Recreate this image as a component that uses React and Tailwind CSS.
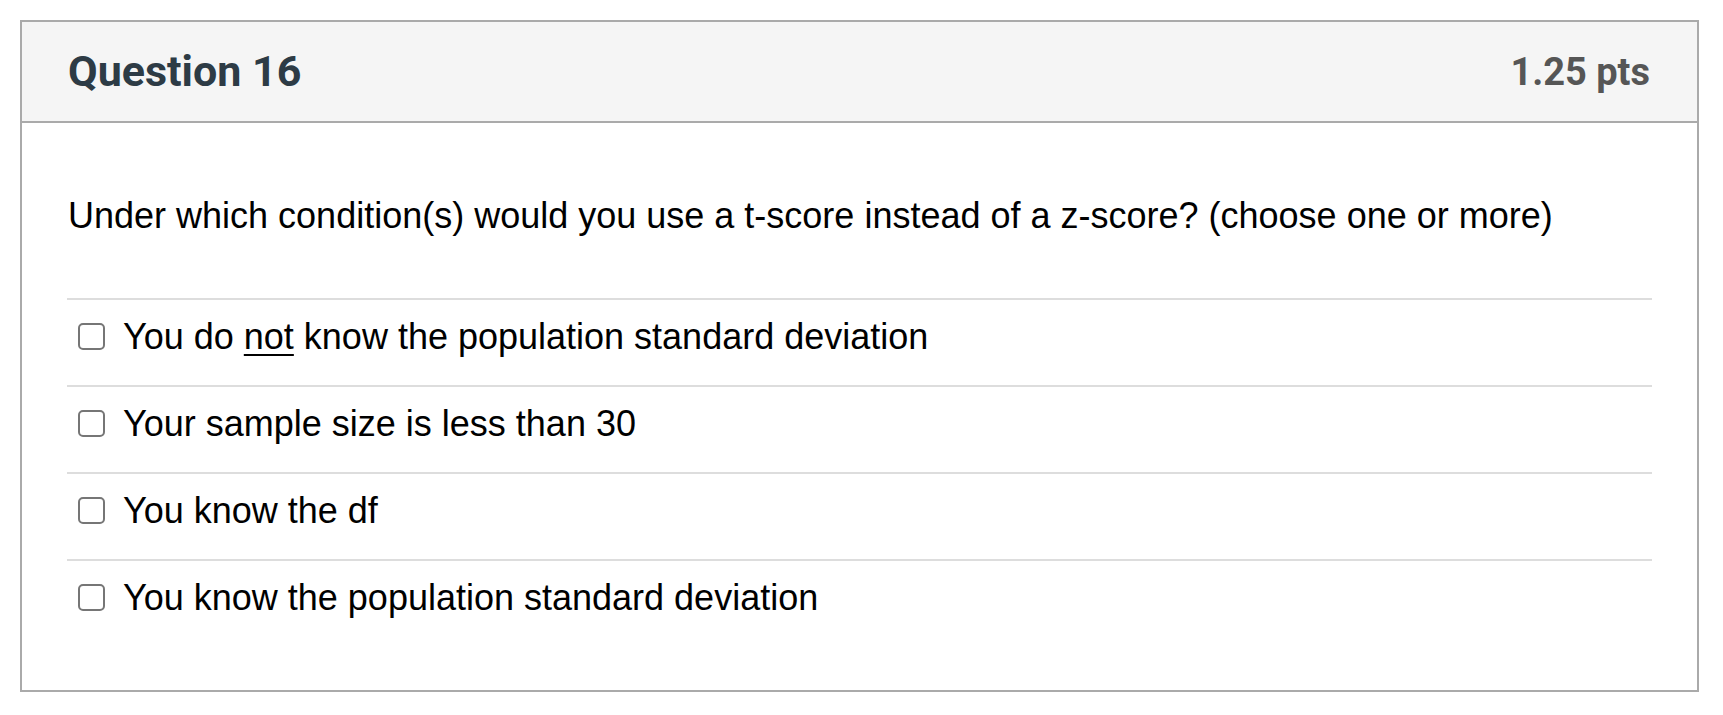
import React from 'react';

const ANSWERS = [
  { id: 1, text: <>You do <span className="underline underline-offset-[5px] decoration-2">not</span> know the population standard deviation</> },
  { id: 2, text: 'Your sample size is less than 30' },
  { id: 3, text: 'You know the df' },
  { id: 4, text: 'You know the population standard deviation' },
];

export default function App() {
  return (
    <div className="min-h-screen bg-white pt-5 px-5 font-['Liberation_Sans',Arial,sans-serif]">
      <div className="w-[1679px] border-2 border-[#aaaaaa]">
        {/* Header */}
        <div className="h-[101px] bg-[#f5f5f5] border-b-2 border-[#aaaaaa] pl-[46px] pr-[47px] flex items-center justify-between font-['Roboto',sans-serif] font-bold">
          <h2 className="text-[43px] leading-none text-[#2d3b45]">Question 16</h2>
          <span className="text-[38px] leading-none text-[#565656]">1.25 pts</span>
        </div>

        {/* Body */}
        <div className="pl-[45px] pr-[45px] pt-[72px] pb-[44px]">
          <p className="text-[36px] leading-[41px] text-black pl-[1px] mb-[62px]">
            Under which condition(s) would you use a t-score instead of a z-score? (choose one or more)
          </p>
          <div>
            {ANSWERS.map((a) => (
              <label key={a.id} className="flex items-center border-t-2 border-[#dddddd] pt-[16px] pb-[28px] pl-[11px]">
                <span className="w-[27px] h-[27px] shrink-0 rounded-[5px] border-2 border-[#767676] bg-white" />
                <span className="ml-[18px] text-[36px] leading-[41px] text-black">{a.text}</span>
              </label>
            ))}
          </div>
        </div>
      </div>
    </div>
  );
}
